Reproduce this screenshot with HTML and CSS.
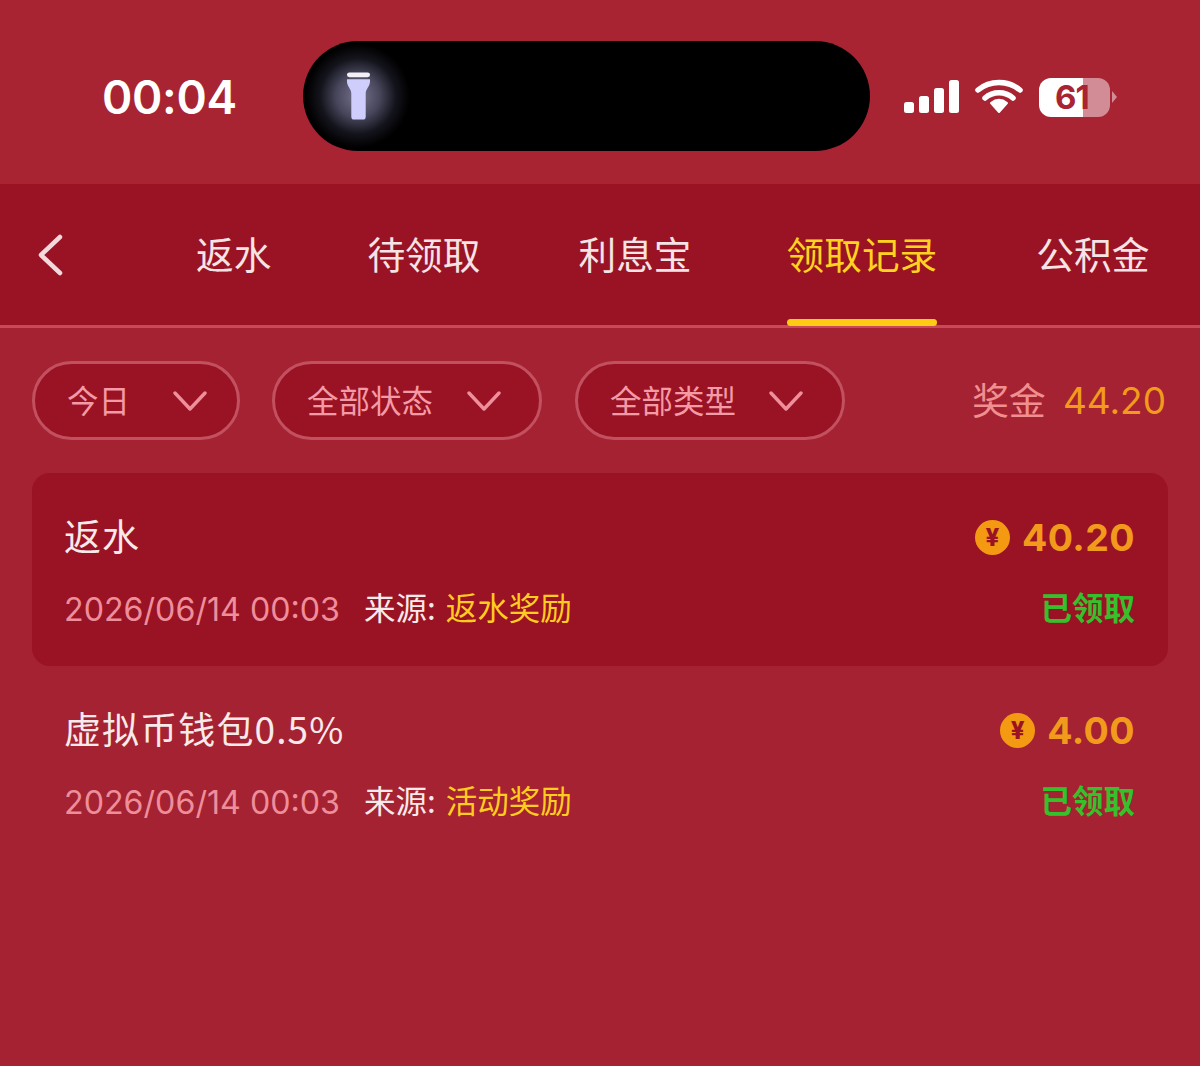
FILE: index.html
```html
<!DOCTYPE html>
<html lang="zh-CN">
<head>
<meta charset="utf-8">
<title>领取记录</title>
<link rel="stylesheet" href="styles.css">
</head>
<body>
<div class="statusbar">
  <span class="time">00:04</span>
  <div class="island">
    <div class="glow">
      <svg class="torch" width="26" height="52" viewBox="0 0 26 52"><rect x="1" y="1" width="24" height="5" rx="2.5" fill="#f4eef6"/><path d="M1 8H25V10C25 16 20.500 18 20.500 23V47Q20.500 50 17.500 50H8.500Q5.500 50 5.500 47V23C5.500 18 1 16 1 10Z" fill="#cfcdfb"/></svg>
    </div>
  </div>
  <div class="indicators">
    <svg width="56" height="36" viewBox="0 0 56 36"><rect x="1" y="23" width="10" height="11" rx="2.500" fill="#fff"/><rect x="16" y="17" width="10" height="17" rx="2.500" fill="#fff"/><rect x="31" y="9" width="10" height="25" rx="2.500" fill="#fff"/><rect x="46" y="1" width="10" height="33" rx="2.500" fill="#fff"/></svg>
    <svg class="wifi" width="48" height="36" viewBox="0 0 48 36"><path d="M3 11C15 1 33 1 45 11M10 19C18 12 30 12 38 19" fill="none" stroke="#fff" stroke-width="5.500" stroke-linecap="round"/><path d="M16 24C21 20 27 20 32 24L24 33Z" fill="#fff" stroke="#fff" stroke-width="2" stroke-linejoin="round"/></svg>
    <div class="battery"><span class="batt-num">61</span></div>
    <span class="batt-cap"></span>
  </div>
</div>

<nav class="tabs">
  <svg class="back" width="30" height="44" viewBox="0 0 30 44"><path d="M24 4L5 22L24 40" fill="none" stroke="#f3d9dc" stroke-width="4.500" stroke-linecap="round" stroke-linejoin="round"/></svg>
  <span class="tab t1">返水</span>
  <span class="tab t2">待领取</span>
  <span class="tab t3">利息宝</span>
  <span class="tab t4 active">领取记录</span>
  <span class="tab t5">公积金</span>
</nav>

<main class="content">
  <div class="filters">
    <button class="pill p1"><span>今日</span><svg class="chev" width="34" height="20" viewBox="0 0 34 20"><path d="M2 2L17 18L32 2" fill="none" stroke="#f08f9c" stroke-width="3.400" stroke-linecap="round" stroke-linejoin="round"/></svg></button>
    <button class="pill p2"><span>全部状态</span><svg class="chev" width="34" height="20" viewBox="0 0 34 20"><path d="M2 2L17 18L32 2" fill="none" stroke="#f08f9c" stroke-width="3.400" stroke-linecap="round" stroke-linejoin="round"/></svg></button>
    <button class="pill p3"><span>全部类型</span><svg class="chev" width="34" height="20" viewBox="0 0 34 20"><path d="M2 2L17 18L32 2" fill="none" stroke="#f08f9c" stroke-width="3.400" stroke-linecap="round" stroke-linejoin="round"/></svg></button>
    <div class="bonus"><span class="bonus-label">奖金</span><span class="bonus-value">44.20</span></div>
  </div>

  <article class="record highlighted">
    <div class="row top">
      <span class="title">返水</span>
      <span class="amount"><span class="coin">¥</span><span>40.20</span></span>
    </div>
    <div class="row bottom">
      <span class="meta"><span class="date">2026/06/14 00:03</span><span class="source">来源:</span><span class="source-v">返水奖励</span></span>
      <span class="status">已领取</span>
    </div>
  </article>
  <article class="record">
    <div class="row top">
      <span class="title">虚拟币钱包0.5%</span>
      <span class="amount"><span class="coin">¥</span><span>4.00</span></span>
    </div>
    <div class="row bottom">
      <span class="meta"><span class="date">2026/06/14 00:03</span><span class="source">来源:</span><span class="source-v">活动奖励</span></span>
      <span class="status">已领取</span>
    </div>
  </article>
</main>
</body>
</html>
```

FILE: styles.css
```css
* { box-sizing: border-box; }
html, body { margin: 0; padding: 0; }
body {
  width: 1200px;
  height: 1066px;
  overflow: hidden;
  background: #a42231;
  font-family: "Noto Sans CJK SC", "Inter", sans-serif;
  color: #fff;
}

.statusbar {
  height: 184px;
  display: flex;
  align-items: flex-start;
  padding-top: 41px;
  padding-left: 102px;
  background: #a82433;
}
.time {
  width: 201px;
  margin-top: 27px;
  font-family: "Inter", sans-serif;
  font-size: 46px;
  line-height: 58px;
  font-weight: 600;
  letter-spacing: -0.3px;
}
.island {
  width: 567px;
  height: 110px;
  border-radius: 55px;
  background: #000;
  overflow: hidden;
  display: flex;
  align-items: center;
}
.glow {
  width: 110px;
  height: 110px;
  flex: none;
  display: flex;
  align-items: center;
  justify-content: center;
  background: radial-gradient(circle at 55px 55px, rgba(190,188,230,.62) 0, rgba(140,138,180,.5) 22px, rgba(70,70,100,.28) 38px, rgba(0,0,0,0) 52px);
}
.torch { display: block; width: 25px; height: 51px; }
.indicators {
  display: flex;
  align-items: center;
  margin-top: 37px;
  margin-left: 33px;
  height: 38px;
}
.wifi { margin-left: 16px; }
.battery {
  width: 71px;
  height: 39px;
  margin-left: 16px;
  border-radius: 12px;
  background: linear-gradient(90deg, #fff 0, #fff 62%, #d28c95 62%, #d28c95 100%);
  display: flex;
  align-items: center;
  padding-left: 16px;
}
.batt-num {
  color: #a82433;
  font-family: "Inter", sans-serif;
  font-size: 33px;
  line-height: 39px;
  font-weight: 700;
  letter-spacing: -1px;
}
.batt-cap {
  width: 0;
  height: 0;
  margin-left: 2px;
  border-left: 5px solid #d28c95;
  border-top: 6px solid transparent;
  border-bottom: 6px solid transparent;
}

.tabs {
  position: relative;
  height: 144px;
  background: #991324;
  border-bottom: 3px solid #c9495a;
  display: flex;
  align-items: center;
  padding-left: 40px;
  padding-bottom: 3px;
}
.back { position: absolute; left: 36px; top: 49px; }
.tab {
  font-size: 37.7px;
  line-height: 50px;
  color: #f6e3e5;
  flex: none;
  margin-top: -1px;
}
.t1 { margin-left: 156px; }
.t2 { margin-left: 96px; }
.t3 { margin-left: 98px; }
.t4 { margin-left: 95px; }
.t5 { margin-left: 99px; }
.tab.active { color: #ffd21f; position: relative; }
.tab.active::after {
  content: "";
  position: absolute;
  left: 0;
  right: 0;
  bottom: -48px;
  height: 7px;
  border-radius: 4px;
  background: #ffcc15;
}

.content { padding: 0 32px; }
.filters {
  display: flex;
  align-items: center;
  height: 79px;
  margin-top: 33px;
}
.pill {
  height: 79px;
  border: 3px solid #c2505f;
  border-radius: 40px;
  background: #991324;
  display: flex;
  align-items: center;
  justify-content: space-between;
  padding: 0 30px 0 32px;
  font: inherit;
  font-size: 31.5px;
  color: #f49aa6;
}
.pill span { line-height: 40px; margin-bottom: 4px; }
.p1 { width: 208px; }
.p2 { width: 270px; margin-left: 32px; padding-right: 38px; }
.p3 { width: 270px; margin-left: 33px; padding-right: 39px; }
.bonus {
  margin-left: auto;
  padding-right: 2px;
  display: flex;
  align-items: center;
  gap: 17px;
  font-size: 37px;
  line-height: 50px;
}
.bonus-label { color: #f08f8f; margin-bottom: 4px; }
.bonus-value { color: #f29a1c; font-family: "Inter", sans-serif; }

.record {
  height: 193px;
  padding: 37px 33px 0 32px;
  border-radius: 18px;
}
.highlighted {
  margin-top: 33px;
  background: #991324;
}
.row {
  display: flex;
  justify-content: space-between;
  align-items: center;
}
.top { height: 50px; }
.bottom { height: 42px; margin-top: 25px; }
.title {
  font-size: 37px;
  line-height: 50px;
  color: #f8e9ea;
  letter-spacing: 1.1px;
}
.amount {
  display: flex;
  align-items: center;
  gap: 12px;
  margin-top: 4px;
  font-family: "Inter", sans-serif;
  font-size: 37.5px;
  font-weight: 700;
  color: #f29a1c;
  letter-spacing: 0.4px;
}
.coin {
  width: 35px;
  height: 35px;
  border-radius: 50%;
  background: #f49a12;
  color: #991324;
  font-size: 24px;
  font-weight: 800;
  line-height: 35px;
  text-align: center;
  letter-spacing: 0;
}
.meta { display: flex; align-items: center; font-size: 31.5px; }
.date {
  font-family: "Inter", sans-serif;
  color: #ee8e9b;
  width: 300px;
  font-size: 32.2px;
  margin-top: 6px;
}
.source { color: #f8e9ea; margin-right: 10px; }
.source-v { color: #ffcb1f; }
.status { font-size: 31.5px; font-weight: 700; color: #36c02c; }
```
